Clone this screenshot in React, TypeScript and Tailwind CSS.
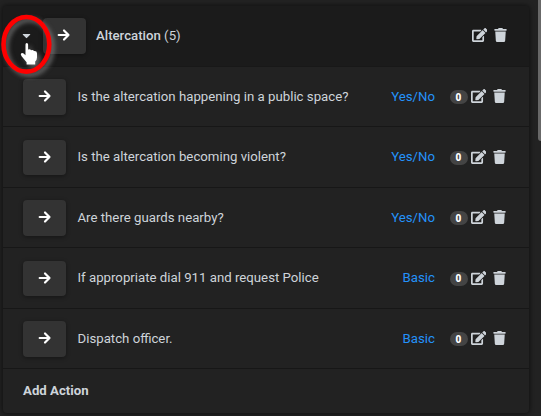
import React from 'react';
import { FaEdit, FaTrash, FaCaretDown } from 'react-icons/fa';

type Question = { text: string; kind: string; count: number };

const questions: Question[] = [
  { text: 'Is the altercation happening in a public space?', kind: 'Yes/No', count: 0 },
  { text: 'Is the altercation becoming violent?', kind: 'Yes/No', count: 0 },
  { text: 'Are there guards nearby?', kind: 'Yes/No', count: 0 },
  { text: 'If appropriate dial 911 and request Police', kind: 'Basic', count: 0 },
  { text: 'Dispatch officer.', kind: 'Basic', count: 0 },
];

function MoveButton() {
  return (
    <button className="flex h-[35.5px] w-[43px] shrink-0 items-center justify-center rounded-[4px] bg-[#333333] text-white shadow-[0_1px_4px_rgba(0,0,0,0.4)]">
      <svg className="mb-px size-[14px]" viewBox="0 0 14 14" fill="none" stroke="currentColor" strokeWidth="2.2" strokeLinecap="round" strokeLinejoin="round">
        <path d="M1.7 7H11.5M7 2.5L11.5 7L7 11.5" />
      </svg>
    </button>
  );
}

function RowIcons() {
  return (
    <div className="mb-[1.5px] flex items-center gap-[6.5px] text-[#ced4da]">
      <FaEdit className="h-[14px] w-[15.5px]" />
      <FaTrash className="h-[14px] w-[13px]" />
    </div>
  );
}

function HighlightedCursor() {
  return (
    <svg className="pointer-events-none absolute left-0 top-[8px] drop-shadow-[3px_3px_2px_rgba(150,150,150,0.55)]" width="60" height="72" viewBox="0 8 60 72">
      <ellipse cx="26.4" cy="44.3" rx="22.9" ry="27.3" fill="none" stroke="#fe0000" strokeWidth="4.6" />
      <path
        d="M25.5 44.5q0-1.5 1.3-1.5t1.3 1.5v5q2.2-.8 2.9.7q2.3-.8 2.9.8q3.1-.3 3.1 2.3v4.2q0 2.4-1.8 4v2.9h-8.6v-2.1l-5-6q-1.5-2.2-.3-3.1q1.6-1 4.2 2z"
        fill="white"
      />
    </svg>
  );
}

export default function App() {
  return (
    <div className="relative flex h-[416px] w-[541px] justify-between overflow-hidden bg-[#222222] pl-[3px] pt-[6px] font-['Roboto',sans-serif] text-[13.22px] text-[#ced4da]">
      <section className="h-[407px] w-[526px] rounded-[4px] bg-[#222222] shadow-[0_0_4px_1px_rgba(0,0,0,0.5)]">
        <header className="flex h-[60.5px] items-center rounded-t-[4px] border-b border-[#181818] bg-[#1b1b1b] pr-[22.5px]">
          <div className="flex w-[39.5px] justify-center pl-[7px]">
            <FaCaretDown className="size-[13px]" />
          </div>
          <MoveButton />
          <div className="ml-[10.5px] flex-1">
            <span className="font-medium">Altercation</span> (5)
          </div>
          <RowIcons />
        </header>
        {questions.map((q) => (
          <div key={q.text} className="flex h-[60.5px] items-center border-b border-[#171717] pl-5 pr-[23.5px] pt-[1px]">
            <MoveButton />
            <div className="ml-[11.5px] flex-1">{q.text}</div>
            <span className="text-[#2492fa]">{q.kind}</span>
            <span className="ml-[14.5px] mr-[3px] mt-[1px] flex h-[14px] w-[18px] items-center justify-center rounded-full bg-[#444444] text-[10px] font-black text-white">
              {q.count}
            </span>
            <RowIcons />
          </div>
        ))}
        <div className="flex h-[44px] items-center pl-5 font-bold">Add Action</div>
      </section>
      <div className="-mt-[6px] h-[141px] w-[3px] rounded-bl-[3px] bg-[#686868]" />
      <HighlightedCursor />
    </div>
  );
}
